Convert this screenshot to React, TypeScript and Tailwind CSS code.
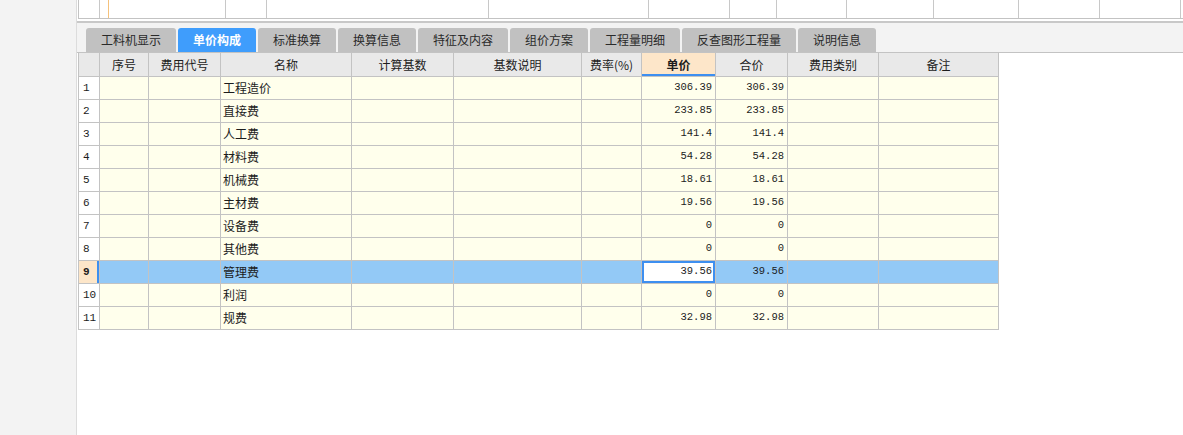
import React from 'react'

const cjk = { fontFamily: '"Noto Sans CJK SC", "Liberation Sans", sans-serif' }
const mono = { fontFamily: '"Liberation Mono", "DejaVu Sans Mono", monospace' }

const tabs = [
  { label: '工料机显示', w: 'w-[90px]' },
  { label: '单价构成', w: 'w-[78px]', active: true },
  { label: '标准换算', w: 'w-[78px]' },
  { label: '换算信息', w: 'w-[78px]' },
  { label: '特征及内容', w: 'w-[90px]' },
  { label: '组价方案', w: 'w-[78px]' },
  { label: '工程量明细', w: 'w-[90px]' },
  { label: '反查图形工程量', w: 'w-[114px]' },
  { label: '说明信息', w: 'w-[78px]' },
]

const stripCols = [
  'w-[21px]',
  'w-[9px]',
  'w-[117px]',
  'w-[41px]',
  'w-[222px]',
  'w-[160px]',
  'w-[81px]',
  'w-[47px]',
  'w-[70px]',
  'w-[87px]',
  'w-[85px]',
  'w-[81px]',
  'w-[81px]',
]

const rows = [
  ['工程造价', '306.39'],
  ['直接费', '233.85'],
  ['人工费', '141.4'],
  ['材料费', '54.28'],
  ['机械费', '18.61'],
  ['主材费', '19.56'],
  ['设备费', '0'],
  ['其他费', '0'],
  ['管理费', '39.56'],
  ['利润', '0'],
  ['规费', '32.98'],
]

const cell = 'border-r border-b border-[#c3c3c3] flex items-center shrink-0'

export default function App() {
  return (
    <div className="flex h-screen bg-white text-[#1c1c1c]" style={cjk}>
      <div className="w-[77px] shrink-0 bg-[#f3f3f3] border-r border-[#dcdcdc]" />
      <div className="flex-1 flex flex-col min-w-0">
        {/* upper grid strip */}
        <div className="flex h-[19px] ml-px border-l border-b border-[#c3c3c3]">
          {stripCols.map((w, i) => (
            <div
              key={i}
              className={`${w} shrink-0 border-r ${i === 1 ? 'border-[#f5c27c]' : 'border-[#c8c8c8]'}`}
            />
          ))}
        </div>

        {/* tab bar */}
        <div className="mt-[2px] border-t-2 border-b border-t-[#c8c8c8] border-b-[#c3c3c3] bg-[#f3f3f3] pt-[5px] pl-[9px] flex gap-[2px]">
          {tabs.map((t) => (
            <div
              key={t.label}
              className={`${t.w} h-[24px] rounded-t-[3px] flex items-center justify-center text-[12px] ${
                t.active ? 'bg-[#3f9dfc] text-white font-bold' : 'bg-[#c1c1c1] text-[#2a2a2a]'
              }`}
            >
              {t.label}
            </div>
          ))}
        </div>

        {/* table */}
        <div className="ml-px self-start border-l border-[#c3c3c3] text-[12px]">
          <div className="flex h-[24px] bg-[#e9e9e9]">
            <div className={`${cell} w-[21px]`} />
            {[
              ['序号', 'w-[49px]'],
              ['费用代号', 'w-[72px]'],
              ['名称', 'w-[131px]'],
              ['计算基数', 'w-[102px]'],
              ['基数说明', 'w-[128px]'],
              ['费率(%)', 'w-[60px]'],
              ['单价', 'w-[74px]'],
              ['合价', 'w-[72px]'],
              ['费用类别', 'w-[91px]'],
              ['备注', 'w-[120px]'],
            ].map(([label, w]) =>
              label === '单价' ? (
                <div
                  key={label}
                  className={`${cell} ${w} justify-center bg-[#fde6c9] font-bold shadow-[inset_0_-2px_0_#3d8ff0]`}
                >
                  {label}
                </div>
              ) : (
                <div key={label} className={`${cell} ${w} justify-center`}>
                  {label}
                </div>
              )
            )}
          </div>

          {rows.map(([name, price], i) => {
            const sel = i === 8
            const bg = sel ? 'bg-[#93c9f6]' : 'bg-[#ffffec]'
            return (
              <div key={i} className="flex h-[23px]">
                <div
                  className={`${cell} w-[21px] pl-[4px] text-[11px] ${
                    sel ? 'bg-[#fde6c9] font-bold shadow-[inset_-2px_0_0_#3d8ff0]' : 'bg-white'
                  }`}
                  style={mono}
                >
                  {i + 1}
                </div>
                <div className={`${cell} ${bg} w-[49px]`} />
                <div className={`${cell} ${bg} w-[72px]`} />
                <div className={`${cell} ${bg} w-[131px] pl-[2px]`}>{name}</div>
                <div className={`${cell} ${bg} w-[102px]`} />
                <div className={`${cell} ${bg} w-[128px]`} />
                <div className={`${cell} ${bg} w-[60px]`} />
                <div
                  className={`${cell} w-[74px] justify-end pr-[3px] text-[10.5px] ${
                    sel ? 'bg-white shadow-[inset_0_0_0_2px_#3d8ff0]' : 'bg-[#ffffec]'
                  }`}
                  style={mono}
                >
                  {price}
                </div>
                <div className={`${cell} ${bg} w-[72px] justify-end pr-[3px] text-[10.5px]`} style={mono}>
                  {price}
                </div>
                <div className={`${cell} ${bg} w-[91px]`} />
                <div className={`${cell} ${bg} w-[120px]`} />
              </div>
            )
          })}
        </div>
      </div>
    </div>
  )
}
